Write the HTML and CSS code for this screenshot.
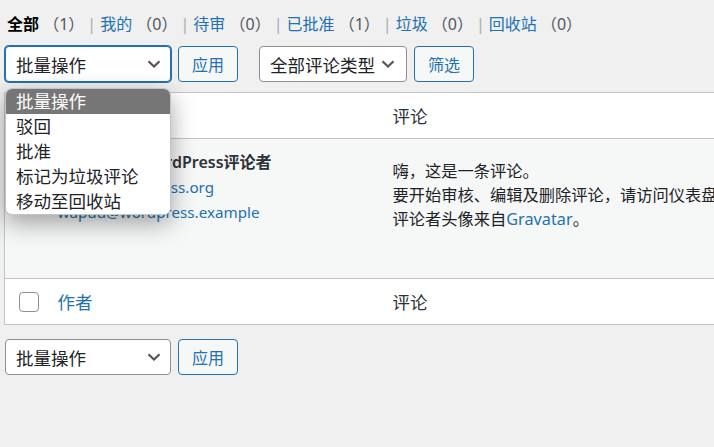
FILE: index.html
```html
<!DOCTYPE html>
<html lang="zh-CN">
<head>
<meta charset="utf-8">
<title>评论</title>
<link rel="stylesheet" href="styles.css">
</head>
<body>
<div class="wrap">
  <ul class="subsubsub">
    <li><a class="current">全部 <span class="count">（1）</span></a><span class="sep">|</span></li>
    <li><a>我的 <span class="count">（0）</span></a><span class="sep">|</span></li>
    <li><a>待审 <span class="count">（0）</span></a><span class="sep">|</span></li>
    <li><a>已批准 <span class="count">（1）</span></a><span class="sep">|</span></li>
    <li><a>垃圾 <span class="count">（0）</span></a><span class="sep">|</span></li>
    <li><a>回收站 <span class="count">（0）</span></a></li>
  </ul>

  <div class="tablenav top">
    <div class="select bulk focused">
      <span class="select-label">批量操作</span>
      <svg class="chev" width="14" height="8" viewBox="0 0 14 8"><path d="M1.5 1.2 L7 6.5 L12.5 1.2" fill="none" stroke="#50575e" stroke-width="2.2"/></svg>
    </div>
    <button class="btn">应用</button>
    <div class="select type">
      <span class="select-label">全部评论类型</span>
      <svg class="chev" width="14" height="8" viewBox="0 0 14 8"><path d="M1.5 1.2 L7 6.5 L12.5 1.2" fill="none" stroke="#50575e" stroke-width="2.2"/></svg>
    </div>
    <button class="btn">筛选</button>

    <ul class="dropdown">
      <li class="hl">批量操作</li>
      <li>驳回</li>
      <li>批准</li>
      <li>标记为垃圾评论</li>
      <li>移动至回收站</li>
    </ul>
  </div>

  <table class="list">
    <colgroup><col class="c-cb"><col class="c-author"><col class="c-comment"></colgroup>
    <thead>
      <tr class="head">
        <td class="cb"><span class="checkbox"></span></td>
        <th class="sortable"><a>作者</a></th>
        <th>评论</th>
      </tr>
    </thead>
    <tbody>
      <tr class="row">
        <th class="cb"><span class="checkbox"></span></th>
        <td class="author">
          <span class="avatar"></span>
          <strong class="name">WordPress评论者</strong>
          <a class="line">wordpress.org</a>
          <a class="line email">wapuu@wordpress.example</a>
        </td>
        <td class="comment">
          <p>嗨，这是一条评论。<br>要开始审核、编辑及删除评论，请访问仪表盘的评论页面。<br>评论者头像来自<a>Gravatar</a>。</p>
        </td>
      </tr>
    </tbody>
    <tfoot>
      <tr class="head foot">
        <td class="cb"><span class="checkbox"></span></td>
        <th class="sortable"><a>作者</a></th>
        <th>评论</th>
      </tr>
    </tfoot>
  </table>

  <div class="tablenav bottom">
    <div class="select bulk">
      <span class="select-label">批量操作</span>
      <svg class="chev" width="14" height="8" viewBox="0 0 14 8"><path d="M1.5 1.2 L7 6.5 L12.5 1.2" fill="none" stroke="#50575e" stroke-width="2.2"/></svg>
    </div>
    <button class="btn">应用</button>
  </div>
</div>
</body>
</html>
```

FILE: styles.css
```css
* { box-sizing: border-box; }

html, body {
  margin: 0;
  padding: 0;
  background: #f0f0f1;
  overflow: hidden;
}

body {
  width: 714px;
  height: 447px;
  font-family: "Noto Sans", "Noto Sans CJK SC", sans-serif;
  color: #3c434a;
}

.wrap {
  padding: 12px 0 0 4px;
  width: 1200px;
}

a { color: #2271b1; text-decoration: none; }

/* status links */
.subsubsub {
  list-style: none;
  margin: 0 0 0 3px;
  padding: 0;
  display: flex;
  font-size: 16px;
  line-height: 24px;
  color: #646970;
}
.subsubsub li { white-space: pre; }
.subsubsub a { color: #2271b1; }
.subsubsub a.current { color: #000; font-weight: 600; }
.subsubsub .count { color: #50575e; font-weight: 400; }
.subsubsub .sep { color: #a7aaad; margin: 0 4px 0 3px; }

/* tablenav */
.tablenav {
  display: flex;
  align-items: center;
  position: relative;
}
.tablenav.top { margin-top: 10px; height: 36px; }
.tablenav.bottom { margin-top: 14px; height: 36px; margin-left: 1px; }
.tablenav.top .select.bulk { margin-left: 1px; }

.select {
  height: 36px;
  background: #fff;
  border: 1px solid #8c8f94;
  border-radius: 4px;
  display: flex;
  align-items: center;
  justify-content: space-between;
  padding: 0 9px 0 10px;
  font-size: 17.5px;
  color: #1d2327;
}
.select.focused {
  border-color: #2271b1;
  box-shadow: 0 0 0 1px #2271b1;
}
.select.bulk { width: 166px; }
.select.type { width: 148px; margin-left: 21px; padding-right: 11px; }
.select-label { white-space: nowrap; }

.btn {
  height: 36px;
  width: 60px;
  margin-left: 7px;
  padding: 0;
  border: 1px solid #2271b1;
  border-radius: 4px;
  background: #f6f7f7;
  color: #2271b1;
  font-family: inherit;
  font-size: 16px;
}

/* open dropdown menu (overlays the table) */
.dropdown {
  position: absolute;
  left: 1px;
  top: 42px;
  width: 166px;
  margin: 0;
  padding: 0;
  list-style: none;
  background: #fff;
  border: 1px solid #c3c4c7;
  border-radius: 7px;
  overflow: hidden;
  box-shadow: 0 8px 24px rgba(0, 0, 0, 0.36);
  z-index: 5;
}
.dropdown li {
  height: 25px;
  line-height: 25px;
  padding: 0 10px;
  font-size: 17.5px;
  color: #1d2327;
  white-space: nowrap;
}
.dropdown li.hl { background: #767676; color: #fff; }

/* table */
.list {
  margin-top: 10px;
  width: 1100px;
  table-layout: fixed;
  border-collapse: collapse;
  background: #fff;
  border: 1px solid #c3c4c7;
}
.c-cb { width: 41px; }
.c-author { width: 335px; }

.head th, .head td {
  height: 46px;
  padding: 0 12px;
  text-align: left;
  font-weight: 400;
  font-size: 17.5px;
  color: #2c3338;
  vertical-align: middle;
}
thead .head th, thead .head td { border-bottom: 1px solid #c3c4c7; }
.foot th, .foot td { border-top: 1px solid #c3c4c7; }
.head th.sortable a { color: #2271b1; }

.head td.cb, .row th.cb { padding: 0 0 0 14px; }
.row th.cb { vertical-align: top; padding-top: 18px; }

.checkbox {
  display: block;
  width: 20px;
  height: 20px;
  border: 1px solid #8c8f94;
  border-radius: 4px;
  background: #fff;
}

.row td, .row th {
  background: #f6f7f7;
  height: 140px;
  vertical-align: top;
}
.row td.author {
  padding: 11px 12px 0 12px;
  font-size: 15.2px;
  line-height: 25px;
}
.avatar {
  float: left;
  width: 40px;
  height: 40px;
  margin: 3px 13px 0 0;
  border-radius: 2px;
  background: #d0d3d6;
}
.name { display: block; color: #2c3338; font-weight: 600; font-size: 16px; text-indent: 30px; }
.line { display: block; }
.line.email { clear: left; }

.row td.comment {
  padding: 20px 12px 0 12px;
  font-size: 16.25px;
  line-height: 24px;
  color: #1d2327;
}
.comment p { margin: 0; white-space: nowrap; }
```
